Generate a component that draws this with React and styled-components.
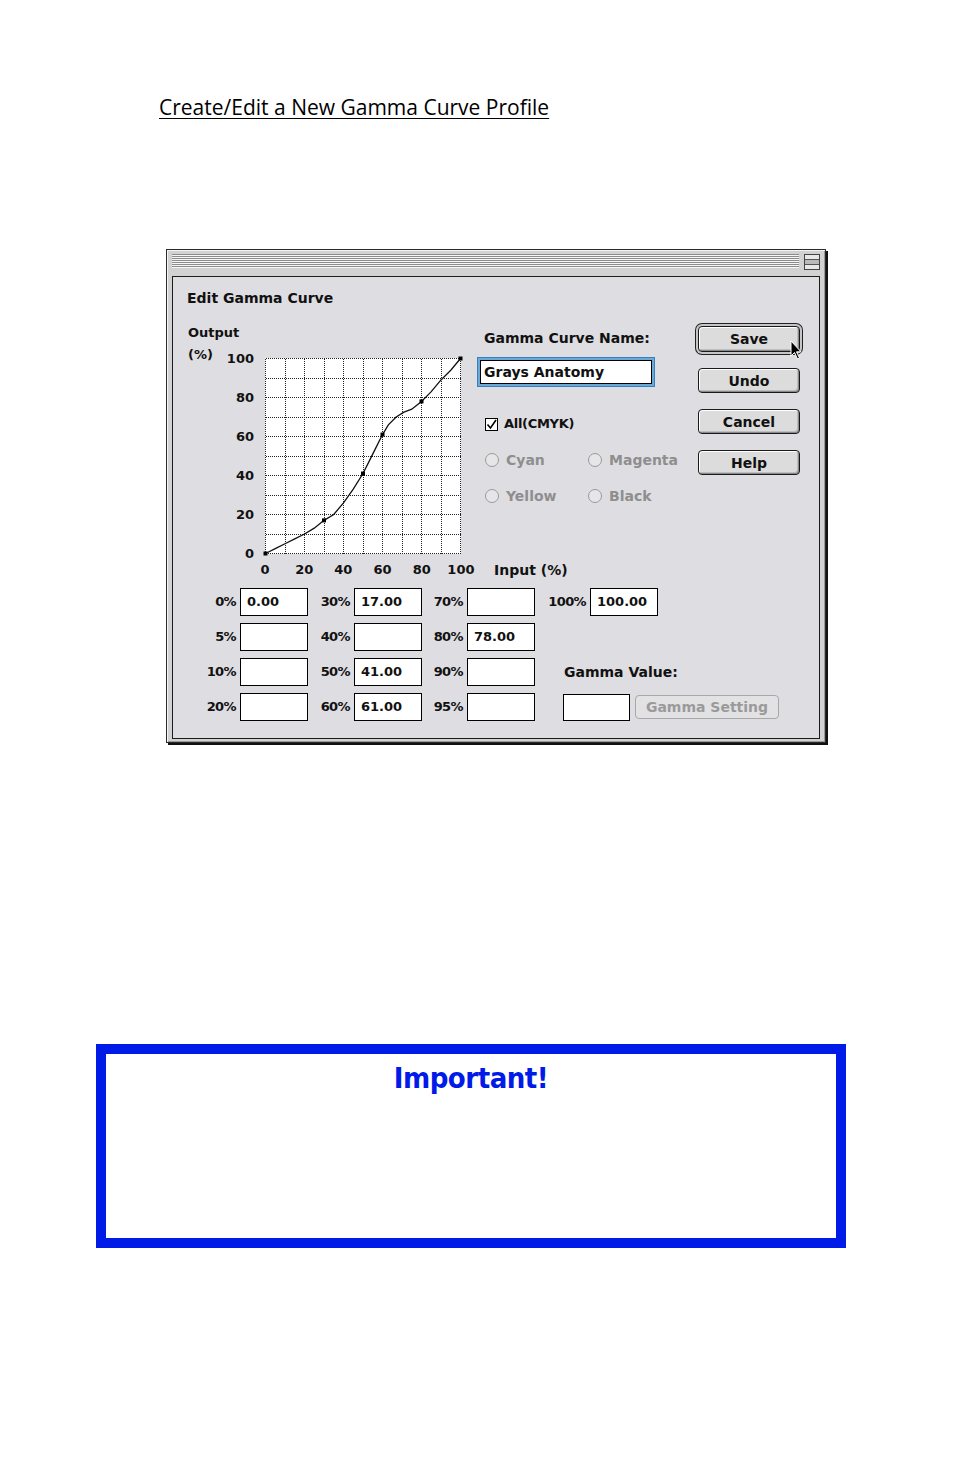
import React from "react";
import styled, { createGlobalStyle } from "styled-components";

const GlobalStyle = createGlobalStyle`
  html, body {
    margin: 0;
    padding: 0;
    background: #fff;
  }
  body {
    font-family: "Open Sans", "Noto Sans", sans-serif;
  }
`;

const UI_FONT = `"DejaVu Sans", "Liberation Sans", sans-serif`;

const Page = styled.div`
  width: 954px;
  height: 1475px;
  padding-top: 94px;
  box-sizing: border-box;
`;

const Heading = styled.h1`
  margin: 0 0 0 159px;
  font-family: "Open Sans", "Noto Sans", sans-serif;
  font-weight: 400;
  font-size: 21px;
  line-height: 26px;
  color: #000;
  text-decoration: underline;
  text-decoration-thickness: 1px;
  text-underline-offset: 3px;
`;

const Window = styled.div`
  margin: 129px 0 0 166px;
  width: 660px;
  height: 494px;
  box-sizing: border-box;
  display: flex;
  flex-direction: column;
  padding: 0 5px 3px 5px;
  background: #d2d2d2;
  border: 1px solid #2a2a2a;
  box-shadow: inset 1px 1px 0 #f4f4f4, inset -1px -1px 0 #9a9a9a,
    2px 2px 0 #111;
`;

const TitleBar = styled.div`
  height: 26px;
  flex: none;
  display: flex;
  align-items: flex-start;
  gap: 5px;
  padding-top: 4px;
  box-sizing: border-box;
`;

const Stripes = styled.div`
  flex: 1;
  height: 14px;
  background: repeating-linear-gradient(
    to bottom,
    #8c8c8c 0 1px,
    #f6f6f6 1px 2px
  );
`;

const CollapseBox = styled.div`
  width: 16px;
  height: 16px;
  box-sizing: border-box;
  border: 1px solid #444;
  background: linear-gradient(
    to bottom,
    #e8e8e8 0 4px,
    #555 4px 5px,
    #bbb 5px 9px,
    #555 9px 10px,
    #e8e8e8 10px
  );
`;

const Panel = styled.div`
  flex: 1;
  background: #dedde1;
  border: 1px solid #1c1c1c;
  padding: 13px 0 0 14px;
  font-family: ${UI_FONT};
  font-weight: 700;
  font-size: 14px;
  line-height: 16px;
  color: #111;
`;

const PanelTitle = styled.div`
  height: 16px;
`;

const TopArea = styled.div`
  margin-top: 17px;
  display: grid;
  grid-template-columns: 290px 218px 110px;
  grid-template-rows: 230px auto;
`;

const ChartBlock = styled.div`
  display: grid;
  grid-template-columns: 38px 29px 11px 197px;
  grid-template-rows: 35px 195px;
  font-size: 13px;
`;

const AxisTitle = styled.div`
  grid-column: 1 / 4;
  grid-row: 1;
  margin: 2px 0 0 1px;
`;

const AxisUnit = styled.div`
  grid-column: 1;
  grid-row: 2;
  margin: -11px 0 0 1px;
  font-size: 13px;
`;

const YTicks = styled.div`
  grid-column: 2;
  grid-row: 2;
  margin: -7px 0 -9px;
  display: flex;
  flex-direction: column;
  justify-content: space-between;
  align-items: flex-end;
`;

const Plot = styled.svg`
  grid-column: 4;
  grid-row: 2;
  display: block;
  overflow: visible;
`;

const XAxisRow = styled.div`
  grid-column: 1 / 3;
  grid-row: 2;
  margin-top: 9px;
  padding-left: 63px;
  display: flex;
  align-items: center;
  height: 16px;
  font-size: 13px;
`;

const XTicks = styled.div`
  width: 226px;
  display: flex;
  justify-content: space-between;

  & > span {
    width: 30px;
    text-align: center;
  }
`;

const InputLabel = styled.span`
  margin-left: 18px;
  font-size: 14px;
`;

const Controls = styled.div`
  display: flex;
  flex-direction: column;
`;

const FieldLabel = styled.div`
  margin-top: ${(p) => p.$top || 0}px;
  padding-left: ${(p) => p.$indent || 0}px;
  white-space: nowrap;
`;

const NameField = styled.div`
  margin: 14px 0 0 3px;
  width: 172px;
  height: 24px;
  box-sizing: border-box;
  background: #fff;
  border: 1px solid #000;
  box-shadow: 0 0 0 2px #6aaad9, 0 0 0 3px #3a80b8;
  padding-left: 3px;
  display: flex;
  align-items: center;
`;

const CheckRow = styled.div`
  margin: 32px 0 0 8px;
  display: flex;
  align-items: center;
  gap: 6px;
  height: 16px;
  font-size: 13px;
  letter-spacing: -0.3px;
`;

const CheckBox = styled.span`
  width: 13px;
  height: 13px;
  box-sizing: border-box;
  border: 1px solid #000;
  background: #fff;
  display: flex;
  align-items: center;
  justify-content: center;
`;

const RadioGrid = styled.div`
  margin: 20px 0 0 8px;
  display: grid;
  grid-template-columns: 103px 103px;
  grid-auto-rows: 16px;
  row-gap: 20px;
`;

const RadioItem = styled.div`
  display: flex;
  align-items: center;
  gap: 7px;
  color: #8e8e8e;
  white-space: nowrap;
`;

const RadioDot = styled.span`
  width: 14px;
  height: 14px;
  box-sizing: border-box;
  border-radius: 50%;
  border: 1px solid #9a9a9a;
  background: #e6e6e8;
`;

const ButtonColumn = styled.div`
  display: flex;
  flex-direction: column;
  align-items: flex-start;
  gap: 16px;
  padding: 3px 0 0 3px;
`;

const MacButton = styled.div`
  position: relative;
  width: 102px;
  height: ${(p) => (p.$default ? 26 : 25)}px;
  box-sizing: border-box;
  border: 1px solid #1a1a1a;
  border-radius: 4px;
  background: #dcdcdc;
  box-shadow: inset 1px 1px 0 #fff, inset -1px -1px 0 #8a8a8a,
    inset -2px -2px 0 #bdbdbd
    ${(p) => (p.$default ? ", 0 0 0 2px #c6c6c6, 0 0 0 3px #222" : "")};
  display: flex;
  align-items: center;
  justify-content: center;
  font-size: 14px;
`;

const Cursor = styled.span`
  position: absolute;
  left: 91px;
  top: 13px;
  width: 14px;
  height: 21px;
  display: block;
`;

const FieldsArea = styled.div`
  margin-top: 10px;
  display: flex;
`;

const ValueGrid = styled.div`
  display: grid;
  grid-template-columns: 49px 68px 38px 68px 37px 68px;
  grid-auto-rows: 28px;
  column-gap: 4px;
  row-gap: 7px;
  font-size: 13px;
`;

const SideGrid = styled.div`
  margin-left: 4px;
  display: grid;
  grid-template-rows: repeat(4, 28px);
  row-gap: 7px;
  font-size: 13px;
`;

const PctLabel = styled.span`
  width: ${(p) => p.$w || "auto"};
  display: flex;
  align-items: center;
  justify-content: flex-end;
  letter-spacing: -0.6px;
`;

const ValueBox = styled.span`
  width: ${(p) => p.$w || 68}px;
  height: ${(p) => p.$h || 28}px;
  box-sizing: border-box;
  border: 1px solid #000;
  background: #fff;
  padding-left: 6px;
  display: flex;
  align-items: center;
`;

const SideRow = styled.div`
  display: flex;
  align-items: center;
  gap: 4px;
  margin-left: ${(p) => p.$indent || 0}px;
`;

const SideTitle = styled.span`
  font-size: 14px;
`;

const DisabledButton = styled.span`
  margin-left: 1px;
  width: 144px;
  height: 24px;
  box-sizing: border-box;
  border: 1px solid #a8a8a8;
  border-radius: 4px;
  background: #e2e2e5;
  color: #9a9a9a;
  display: flex;
  align-items: center;
  justify-content: center;
  font-size: 14px;
`;

const Important = styled.div`
  margin: 301px 0 0 96px;
  width: 750px;
  height: 204px;
  box-sizing: border-box;
  border: 10px solid #001be8;
  padding-top: 6px;
  text-align: center;
`;

const ImportantTitle = styled.div`
  font-family: "DejaVu Sans", "Liberation Sans", sans-serif;
  font-stretch: condensed;
  font-weight: 700;
  font-size: 29px;
  line-height: 36px;
  letter-spacing: -0.5px;
  color: #001be8;
`;

const STEP = 19.5;
const curve = [
  [0, 0], [5, 2.5], [10, 5], [15, 7.5], [20, 10], [25, 13], [30, 17], [35, 20],
  [40, 26], [45, 33], [50, 41], [53, 47], [56, 53], [60, 61], [63, 66],
  [67, 70], [71, 72.5], [75, 74], [80, 78], [85, 83], [90, 89], [95, 94], [100, 100],
];
const marks = [[0, 0], [30, 17], [50, 41], [60, 61], [80, 78], [100, 100]];
const toX = (v) => v * 1.95 + 0.5;
const toY = (v) => 195 - v * 1.95 + 0.5;

const GammaPlot = () => {
  const lines = [];
  for (let i = 0; i <= 10; i++) {
    const p = Math.round(i * STEP) + 0.5;
    lines.push(<line key={"v" + i} x1={p} y1={0.5} x2={p} y2={195.5} />);
    lines.push(<line key={"h" + i} x1={0.5} y1={p} x2={195.5} y2={p} />);
  }
  return (
    <Plot width="197" height="197" viewBox="0 0 197 197">
      <rect x="0" y="0" width="196" height="196" fill="#fff" />
      <g stroke="#222" strokeWidth="1" strokeDasharray="1 1" shapeRendering="crispEdges">
        {lines}
      </g>
      <polyline
        points={curve.map(([x, y]) => `${toX(x)},${toY(y)}`).join(" ")}
        fill="none"
        stroke="#111"
        strokeWidth="1.3"
      />
      {marks.map(([x, y]) => (
        <rect key={x} x={toX(x) - 2} y={toY(y) - 2} width="4" height="4" fill="#000" />
      ))}
    </Plot>
  );
};

const Check = () => (
  <svg width="11" height="11" viewBox="0 0 11 11">
    <path d="M1.5 5.5 L4.5 9 L10 1" fill="none" stroke="#000" strokeWidth="1.6" />
  </svg>
);

const Arrow = () => (
  <svg width="14" height="21" viewBox="0 0 14 21">
    <path
      d="M1 1 L1 16 L4.5 12.5 L7.5 19 L9.5 18 L6.5 11.8 L11 11.8 Z"
      fill="#000"
      stroke="#fff"
      strokeWidth="1"
    />
  </svg>
);

const gridRows = [
  [["0%", "0.00"], ["30%", "17.00"], ["70%", ""]],
  [["5%", ""], ["40%", ""], ["80%", "78.00"]],
  [["10%", ""], ["50%", "41.00"], ["90%", ""]],
  [["20%", ""], ["60%", "61.00"], ["95%", ""]],
];

export default function App() {
  return (
    <Page>
      <GlobalStyle />
      <Heading>Create/Edit a New Gamma Curve Profile</Heading>

      <Window>
        <TitleBar>
          <Stripes />
          <CollapseBox />
        </TitleBar>
        <Panel>
          <PanelTitle>Edit Gamma Curve</PanelTitle>

          <TopArea>
            <ChartBlock>
              <AxisTitle>Output</AxisTitle>
              <AxisUnit>(%)</AxisUnit>
              <YTicks>
                {["100", "80", "60", "40", "20", "0"].map((t) => (
                  <span key={t}>{t}</span>
                ))}
              </YTicks>
              <GammaPlot />
            </ChartBlock>

            <Controls>
              <FieldLabel $top={7} $indent={7}>Gamma Curve Name:</FieldLabel>
              <NameField>Grays Anatomy</NameField>
              <CheckRow>
                <CheckBox>
                  <Check />
                </CheckBox>
                All(CMYK)
              </CheckRow>
              <RadioGrid>
                {["Cyan", "Magenta", "Yellow", "Black"].map((c) => (
                  <RadioItem key={c}>
                    <RadioDot />
                    {c}
                  </RadioItem>
                ))}
              </RadioGrid>
            </Controls>

            <ButtonColumn>
              <MacButton $default>
                Save
                <Cursor>
                  <Arrow />
                </Cursor>
              </MacButton>
              <MacButton>Undo</MacButton>
              <MacButton>Cancel</MacButton>
              <MacButton>Help</MacButton>
            </ButtonColumn>

            <XAxisRow>
              <XTicks>
                {["0", "20", "40", "60", "80", "100"].map((t) => (
                  <span key={t}>{t}</span>
                ))}
              </XTicks>
              <InputLabel>Input (%)</InputLabel>
            </XAxisRow>
          </TopArea>

          <FieldsArea>
            <ValueGrid>
              {gridRows.map((row) =>
                row.map(([label, value]) => (
                  <React.Fragment key={label}>
                    <PctLabel>{label}</PctLabel>
                    <ValueBox>{value}</ValueBox>
                  </React.Fragment>
                ))
              )}
            </ValueGrid>
            <SideGrid>
              <SideRow>
                <PctLabel $w="47px">100%</PctLabel>
                <ValueBox>100.00</ValueBox>
              </SideRow>
              <div />
              <SideRow $indent={25}>
                <SideTitle>Gamma Value:</SideTitle>
              </SideRow>
              <SideRow $indent={24}>
                <ValueBox $w={67} $h={27} />
                <DisabledButton>Gamma Setting</DisabledButton>
              </SideRow>
            </SideGrid>
          </FieldsArea>
        </Panel>
      </Window>

      <Important>
        <ImportantTitle>Important!</ImportantTitle>
      </Important>
    </Page>
  );
}
